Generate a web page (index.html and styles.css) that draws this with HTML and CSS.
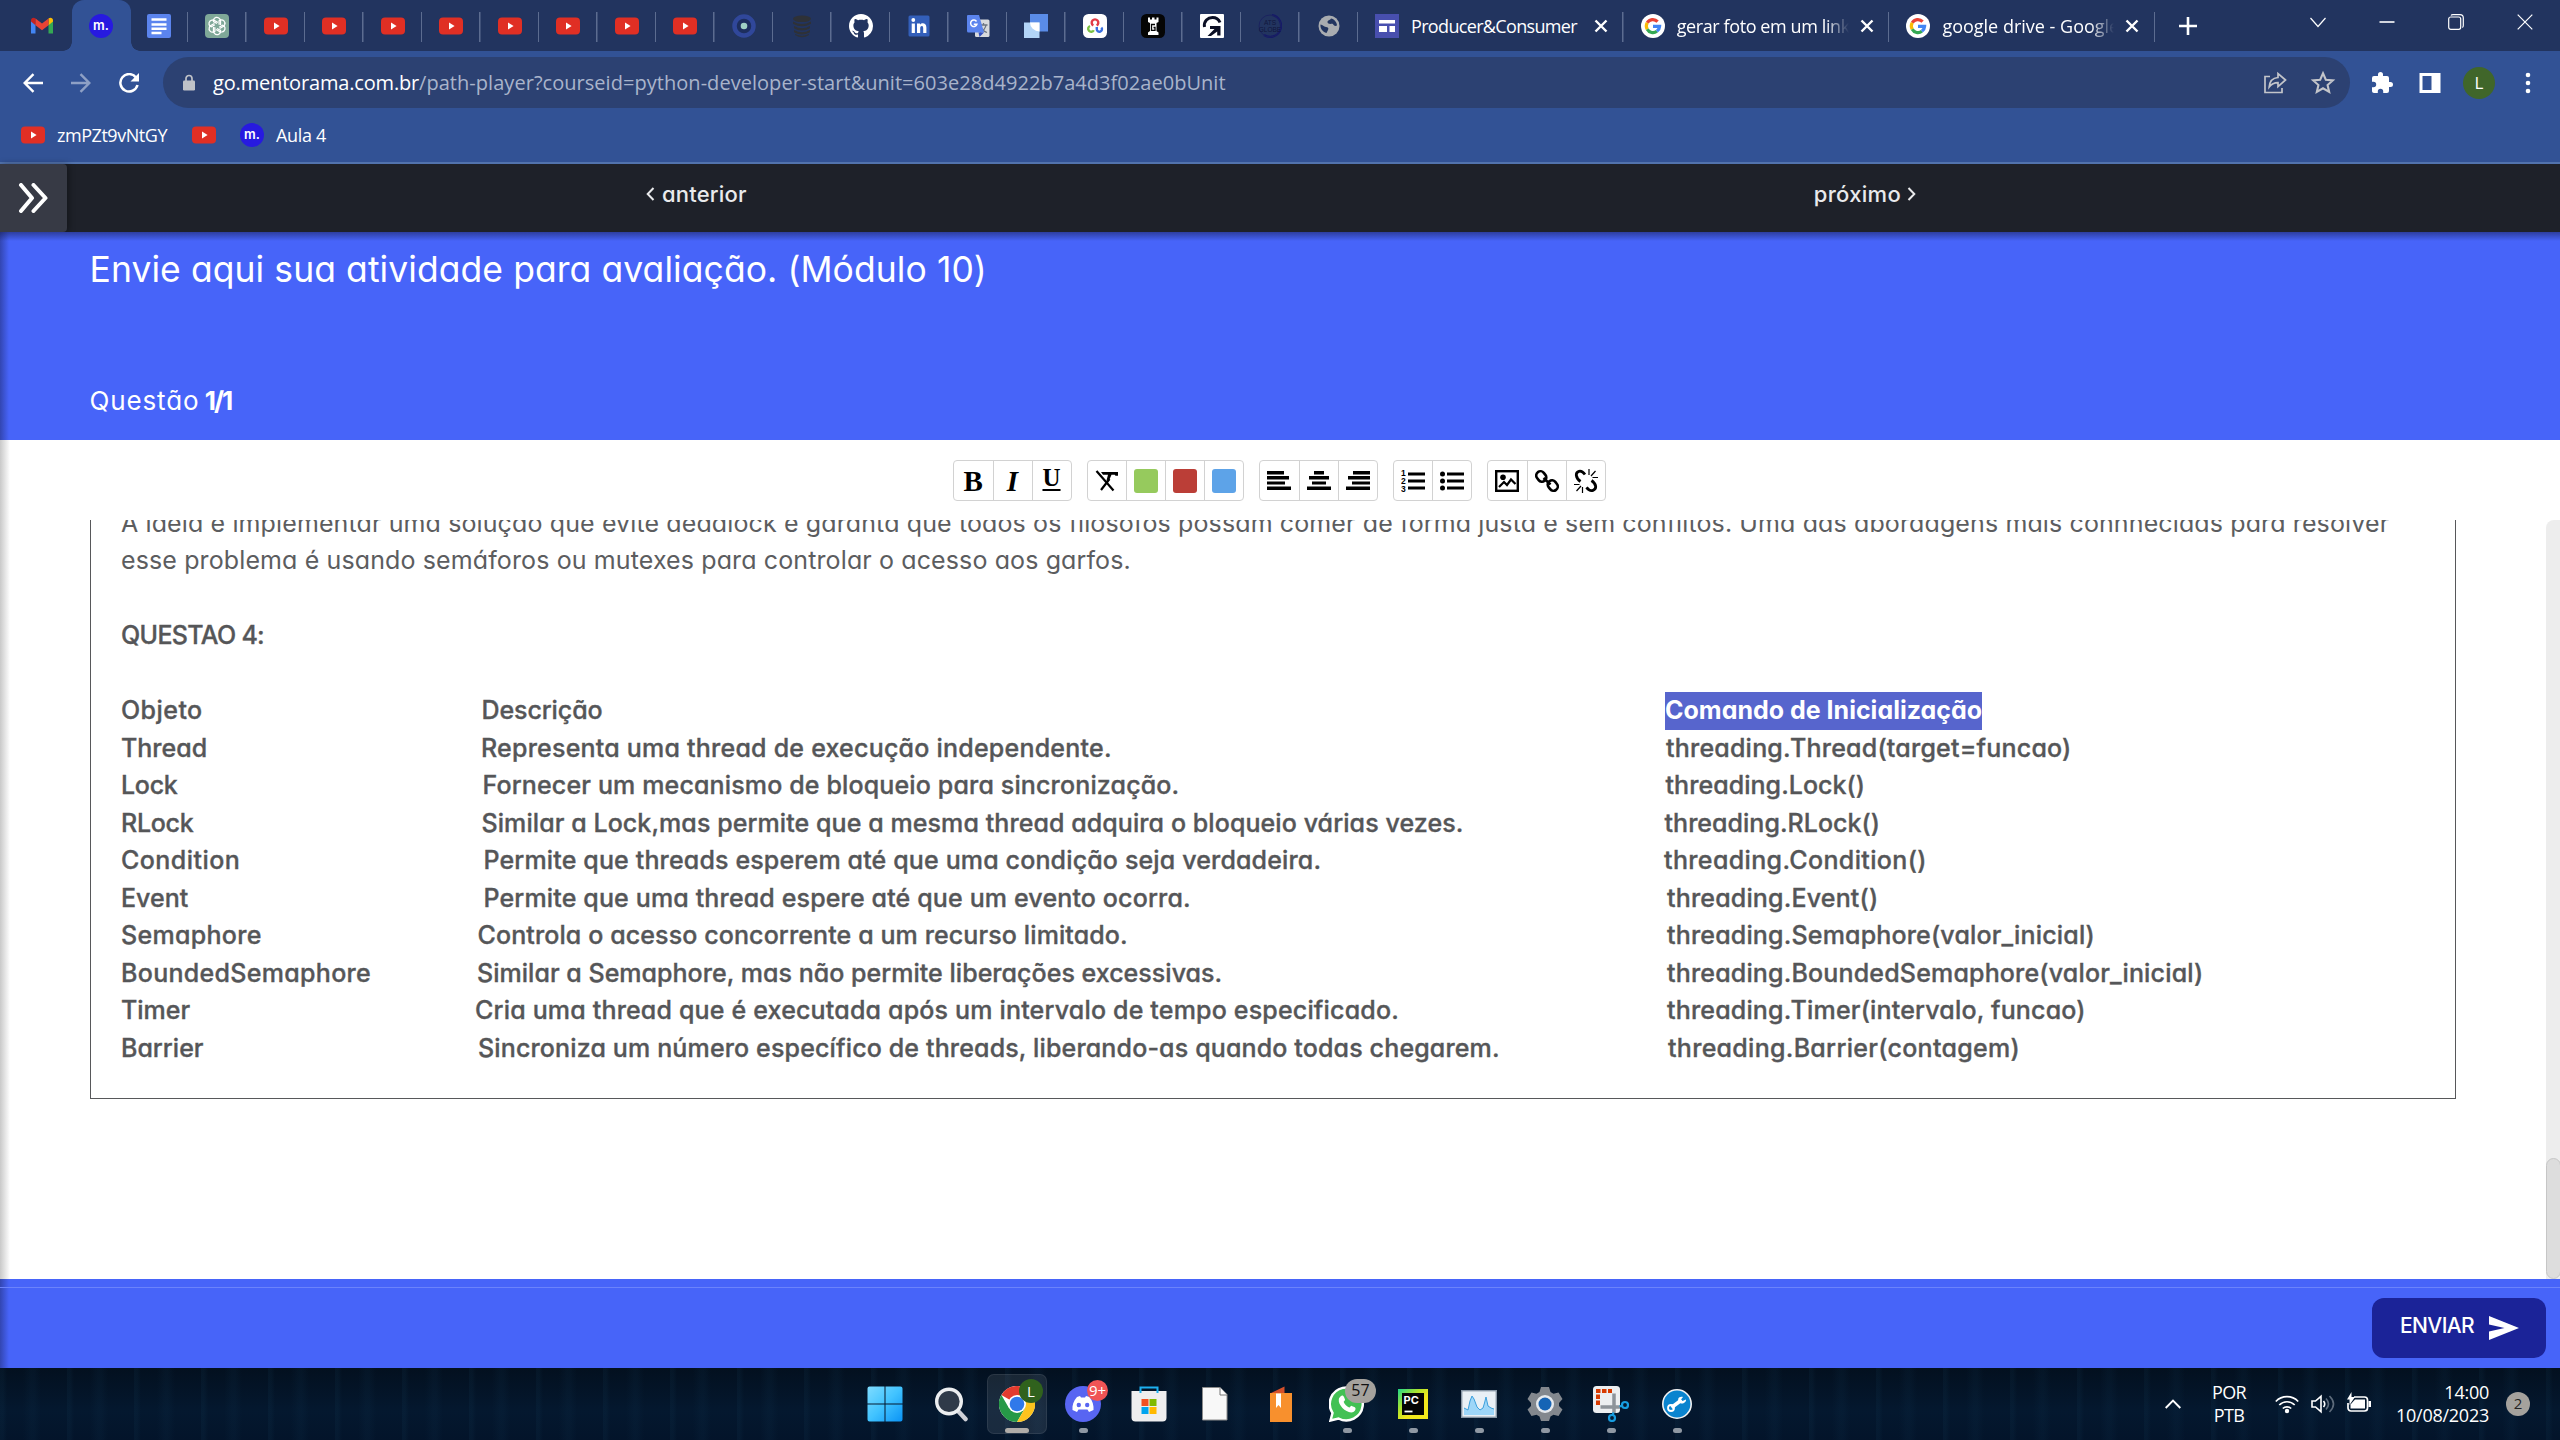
FILE: index.html
```html
<!DOCTYPE html>
<html lang="pt-BR">
<head>
<meta charset="utf-8">
<title>Aula 4</title>
<link rel="stylesheet" href="styles.css">
</head>
<body>
<svg class="defs" aria-hidden="true">
  <symbol id="yt" viewBox="0 0 24 24"><rect y="3.500" width="24" height="17" rx="4" fill="#e02f24"/><path d="M10 8.600v6.800l5.600-3.400z" fill="#fff"/></symbol>
  <symbol id="google" viewBox="0 0 24 24"><circle cx="12" cy="12" r="12" fill="#fff"/><g fill="none" stroke-width="3.200"><path d="M16.600 7.600A6.600 6.600 0 0 0 6.200 8.800" stroke="#ea4335"/><path d="M6.200 8.800a6.600 6.600 0 0 0 0 6.400" stroke="#fbbc05"/><path d="M6.200 15.200a6.600 6.600 0 0 0 9.700 2.100" stroke="#34a853"/><path d="M15.900 17.300a6.600 6.600 0 0 0 2.700-4.900H12" stroke="#4285f4"/></g></symbol>
  <symbol id="x" viewBox="0 0 14 14"><path d="M1.500 1.500l11 11M12.500 1.500l-11 11" stroke="#fff" stroke-width="2.400"/></symbol>
</svg>

<header class="browser">
  <div class="tabs">
    <div class="tab tab-first"><svg class="fav" viewBox="0 0 24 24"><path d="M1 6v13.500h4.500V10z" fill="#4285f4"/><path d="M23 6v13.500h-4.500V10z" fill="#34a853"/><path d="M1 7.500V6.300C1 4 3.500 3 5.500 4.500v6.700z" fill="#c5221f"/><path d="M23 7.500V6.300c0-2.300-2.500-3.300-4.500-1.800v6.700z" fill="#fbbc04"/><path d="M5.500 4.500L12 9.600l6.500-5.100v6.700L12 16.200l-6.500-5z" fill="#ea4335"/></svg></div>
    <div class="tab tab-active"><span class="m-icon">m.</span></div>
    <div class="tab"><svg class="fav" viewBox="0 0 24 24"><rect width="24" height="24" rx="2" fill="#5b84ee"/><path d="M4.500 5.500h15M4.500 10.500h15M4.500 14.800h15M4.500 19h10" stroke="#fff" stroke-width="2.400"/></svg></div>
    <div class="tab"><svg class="fav" viewBox="0 0 24 24"><rect width="24" height="24" rx="4" fill="#7fa898"/><g fill="none" stroke="#fff" stroke-width="1.300"><path id="petal" d="M12 9.500L8.500 7.600V6.200A3.400 3.400 0 0 1 14.500 4.600L15.500 6v5"/><use href="#petal" transform="rotate(60 12 12)"/><use href="#petal" transform="rotate(120 12 12)"/><use href="#petal" transform="rotate(180 12 12)"/><use href="#petal" transform="rotate(240 12 12)"/><use href="#petal" transform="rotate(300 12 12)"/></g></svg></div>
    <div class="tab"><svg class="fav"><use href="#yt"/></svg></div>
    <div class="tab"><svg class="fav"><use href="#yt"/></svg></div>
    <div class="tab"><svg class="fav"><use href="#yt"/></svg></div>
    <div class="tab"><svg class="fav"><use href="#yt"/></svg></div>
    <div class="tab"><svg class="fav"><use href="#yt"/></svg></div>
    <div class="tab"><svg class="fav"><use href="#yt"/></svg></div>
    <div class="tab"><svg class="fav"><use href="#yt"/></svg></div>
    <div class="tab"><svg class="fav"><use href="#yt"/></svg></div>
    <div class="tab"><svg class="fav" viewBox="0 0 24 24"><circle cx="12" cy="12" r="9.500" fill="#1d2e5e" stroke="#30479a" stroke-width="4.500"/><circle cx="12" cy="12" r="3.300" fill="#9fd0c4"/></svg></div>
    <div class="tab"><svg class="fav" viewBox="0 0 24 24"><g fill="#2e3137"><ellipse cx="12" cy="4.800" rx="9" ry="3.300"/><path d="M3 7.500q9 5 18 0v2.300q-9 5-18 0zM4 12q8 4.500 16 0v2.300q-8 4.500-16 0zM4 16q8 4.500 16 0v2.300q-8 4.500-16 0zM5 20q7 3.500 14 0v1q-7 4.500-14 0z"/></g></svg></div>
    <div class="tab"><svg class="fav" viewBox="0 0 16 16"><path fill="#fff" d="M8 0C3.580 0 0 3.580 0 8c0 3.540 2.290 6.530 5.470 7.590.4.070.55-.17.55-.38 0-.19-.01-.82-.01-1.490-2.010.37-2.530-.49-2.690-.94-.09-.23-.48-.94-.82-1.130-.28-.15-.68-.52-.01-.53.63-.01 1.080.58 1.230.82.72 1.210 1.870.87 2.330.66.070-.52.280-.87.510-1.070-1.780-.2-3.640-.89-3.640-3.950 0-.87.310-1.590.82-2.150-.08-.2-.36-1.020.08-2.120 0 0 .67-.21 2.200.82.640-.18 1.320-.27 2-.27s1.360.09 2 .27c1.530-1.040 2.200-.82 2.200-.82.440 1.100.160 1.920.080 2.120.510.560.820 1.270.820 2.150 0 3.070-1.870 3.750-3.650 3.950.290.250.540.730.540 1.480 0 1.070-.01 1.930-.01 2.200 0 .21.150.46.550.38A8 8 0 0 0 16 8c0-4.420-3.580-8-8-8z"/></svg></div>
    <div class="tab"><svg class="fav" viewBox="0 0 24 24"><rect x="1.500" y="1.500" width="21" height="21" rx="1.500" fill="#335fba"/><circle cx="6.300" cy="6" r="1.900" fill="#fff"/><path d="M4.700 9.500h3.200v9.500H4.700zM10 9.500h3v1.300c1.800-2.500 6.400-1.900 6.400 2.600V19h-3.200v-5c0-2.800-3-2.600-3 0v5H10z" fill="#fff"/></svg></div>
    <div class="tab"><svg class="fav" viewBox="0 0 24 24"><rect x="9" y="5.500" width="14.500" height="17.500" rx="1.500" fill="#d8dadd"/><path d="M13.500 11h8M17.500 9v2M20 11c-.5 3-3 6-6 7.500M15 13c1 2.500 3 4.500 6 5.500" stroke="#6b7480" stroke-width="1.300" fill="none"/><path d="M2 1h11l5 17.500H2.500A1.500 1.500 0 0 1 1 17V2a1 1 0 0 1 1-1z" fill="#5b84ee"/><path d="M12.500 18.500H18L13.500 23z" fill="#3450c0"/><path d="M10.500 7.500a3.200 3.200 0 1 0 .4 2.700H7.800" fill="none" stroke="#fff" stroke-width="1.500"/></svg></div>
    <div class="tab"><svg class="fav" viewBox="0 0 24 24"><rect x="6" width="18" height="17.500" fill="#5a8ce8"/><path d="M0 8.500h15.500V24H0z" fill="#b2d4f7"/><path d="M6 8.500h9.500v9A9.500 9 0 0 1 6 8.500z" fill="#fff"/></svg></div>
    <div class="tab"><svg class="fav" viewBox="0 0 24 24"><rect width="24" height="24" rx="5.500" fill="#fff"/><g fill="none" stroke-width="2.400"><path d="M10.300 11.500a3.300 3.300 0 1 1 3.400 0" stroke="#e23b48"/><path d="M7 12a3 3 0 1 0 3.800 4.200" stroke="#7bc143"/><path d="M13.800 13v2a2.600 2.600 0 1 0 4.600-1.500" stroke="#3a6fe0"/></g></svg></div>
    <div class="tab"><svg class="fav" viewBox="0 0 24 24"><rect width="24" height="24" rx="5.500" fill="#050505"/><path d="M7 3.500h2v2h2v-2h2.500v2h2v-2h2V8l-2 1v8l2 1.500V21H7v-2.500L9 17V9L7 8z" fill="#fff"/><path d="M14 10.500h-3.500v5.800H14v-2.800h-1.500" fill="none" stroke="#050505" stroke-width="1.300"/></svg></div>
    <div class="tab"><svg class="fav" viewBox="0 0 24 24"><rect width="24" height="24" rx="1" fill="#fff"/><path d="M4.500 13C3.500 7 8 3.500 12.500 3.500c3.500 0 6 1.500 7.500 5" fill="none" stroke="#0b0f24" stroke-width="3"/><path d="M10 12h10.500v9.500h-3.300v-4L11 22H7.500l7-7H10z" fill="#0b0f24"/></svg></div>
    <div class="tab"><svg class="fav" viewBox="0 0 24 24"><path d="M14 1a11 11 0 1 1-8 20" fill="none" stroke="#15186b" stroke-width="2.200"/><circle cx="12" cy="12" r="11" fill="none" stroke="#1b235f"/><text x="12" y="11" text-anchor="middle" class="ats">ATS</text><text x="12" y="17.500" text-anchor="middle" class="ats">GLOBE</text></svg></div>
    <div class="tab"><svg class="fav" viewBox="0 0 24 24"><circle cx="12" cy="12" r="10.500" fill="#a9acb0"/><path d="M3.500 10.500c2.500.5 3 2 5.500 2.500 2 .3 3 1.200 2 3L9.500 19c-4-1-6.500-5-6-8.500zM14 4.500c3 .5 6 3.500 6 7-2 1-3.500 0-4-1.500-1.500-.5-5.500.8-5.500-2C10.500 6 13 6.500 14 4.500z" fill="#22345f"/></svg></div>
    <div class="tab tab-wide"><svg class="fav" viewBox="0 0 24 24"><rect width="24" height="24" fill="#484fae"/><path d="M4 6h16v3.500H4zM4 12h8v6H4zM14.500 12H20v6h-5.500z" fill="#fff"/></svg><span class="tab-title t1">Producer&amp;Consumer</span><svg class="close"><use href="#x"/></svg></div>
    <div class="tab tab-wide"><svg class="fav"><use href="#google"/></svg><span class="tab-title t2 fade">gerar foto em um link</span><svg class="close"><use href="#x"/></svg></div>
    <div class="tab tab-wide"><svg class="fav"><use href="#google"/></svg><span class="tab-title fade">google drive - Google</span><svg class="close"><use href="#x"/></svg></div>
    <svg class="plus" viewBox="0 0 18 18"><path d="M9 0v18M0 9h18" stroke="#fff" stroke-width="2.600"/></svg>
    <div class="window-buttons">
      <svg viewBox="0 0 16 16"><path d="M.5 4l7.500 8.500L15.500 4"/></svg>
      <svg viewBox="0 0 16 16"><path d="M.5 8h15" stroke-width="1.600"/></svg>
      <svg viewBox="0 0 16 16"><rect x=".7" y="3" width="12" height="12.300" rx="2"/><path d="M3 1.500Q3.500.7 5 .7h7q3.300 0 3.300 3.300v7.500q0 1.500-1 2"/></svg>
      <svg viewBox="0 0 16 16"><path d="M.7.700l14.600 14.600M15.300.7L.7 15.300"/></svg>
    </div>
  </div>
  <div class="address-row">
    <svg class="nav-icon" viewBox="0 0 20 20"><path d="M20 10H2M10.500 1.200L1.700 10l8.800 8.800" fill="none" stroke="#fff" stroke-width="2.400"/></svg>
    <svg class="nav-icon dim" viewBox="0 0 20 20"><path d="M0 10h18M9.500 1.200l8.800 8.800-8.800 8.800" fill="none" stroke="#fff" stroke-width="2.400"/></svg>
    <svg class="nav-icon" viewBox="0 0 20 20"><path d="M17 4.500A8.700 8.700 0 1 0 18.500 12" fill="none" stroke="#fff" stroke-width="2.500"/><path d="M20 0v8.500h-8.500z" fill="#fff"/></svg>
    <div class="url">
      <svg class="lock" viewBox="0 0 12 16"><path d="M3 7V4a3 3 0 0 1 6 0v3" fill="none" stroke="#bfc2c8" stroke-width="1.700"/><rect y="6" width="12" height="10" rx="1.200" fill="#bfc2c8"/></svg>
      <span class="host">go.mentorama.com.br</span><span class="path">/path-player?courseid=python-developer-start&amp;unit=603e28d4922b7a4d3f02ae0bUnit</span>
      <svg class="share" viewBox="0 0 24 24"><path d="M7 5.500H2v16h17V17M22.500 9L15 2.500v4C9 7 6.500 11 6.200 16c2.300-3 5-4.300 8.800-4.300v4z" fill="none" stroke="#c3c5ca" stroke-width="1.700"/></svg>
      <svg class="star" viewBox="0 0 24 24"><path d="M12 3l2.600 6 6.500.6-4.900 4.300 1.500 6.400-5.700-3.400-5.700 3.400 1.500-6.400-4.900-4.300 6.500-.6z" fill="none" stroke="#c3c5ca" stroke-width="1.900"/></svg>
    </div>
    <div class="actions">
      <svg viewBox="0 0 24 24"><path fill="#fff" d="M20.500 11H19V7a2 2 0 0 0-2-2h-4V3.500a2.500 2.500 0 0 0-5 0V5H4a2 2 0 0 0-2 2v3.800h1.500a2.700 2.700 0 0 1 0 5.400H2V20c0 1.100.9 2 2 2h3.800v-1.500a2.700 2.700 0 0 1 5.400 0V22H17a2 2 0 0 0 2-2v-4h1.500a2.500 2.500 0 0 0 0-5z"/></svg>
      <svg viewBox="0 0 24 24"><path fill="#fff" fill-rule="evenodd" d="M1.500 2h21v20h-21zM4.500 5v14h9V5z"/></svg>
      <span class="avatar">L</span>
      <svg viewBox="0 0 24 24"><g fill="#fff"><circle cx="12" cy="4" r="2.300"/><circle cx="12" cy="12" r="2.300"/><circle cx="12" cy="20" r="2.300"/></g></svg>
    </div>
  </div>
  <div class="bookmarks">
    <svg class="fav"><use href="#yt"/></svg><span class="bm1">zmPZt9vNtGY</span>
    <svg class="fav"><use href="#yt"/></svg><span class="m-icon">m.</span><span class="bm2">Aula 4</span>
  </div>
</header>

<main class="page">
  <nav class="lesson-nav">
    <div class="expand"><svg viewBox="0 0 30 30"><path d="M2.500 2L13.500 15 2.500 28M15 2l12 13-12 13" fill="none" stroke="#fff" stroke-width="4" stroke-linecap="round" stroke-linejoin="round"/></svg></div>
    <a class="prev"><svg viewBox="0 0 9 14"><path d="M7.500 1L1.700 7l5.800 6"/></svg>anterior</a>
    <a class="next">próximo<svg viewBox="0 0 9 14"><path d="M1.500 1l5.800 6-5.800 6"/></svg></a>
  </nav>
  <section class="banner">
    <h1>Envie aqui sua atividade para avaliação. (Módulo 10)</h1>
    <p><span class="q">Questão</span> <b>1/1</b></p>
  </section>
  <section class="work">
    <div class="toolbar">
      <div class="group">
        <span class="fmt b">B</span><span class="fmt i">I</span><span class="fmt u">U</span>
      </div>
      <div class="group">
        <span><svg viewBox="0 0 24 24"><path d="M6 3h17v3.800h-2.500l-.8-1H16.500L14 11.500h-2.500L13 5.800H8z"/><path d="M1.500 2l17 19.500M14.500 10L6 21" stroke="#000" stroke-width="2.200" fill="none"/></svg></span>
        <span><i class="swatch green"></i></span><span><i class="swatch red"></i></span><span><i class="swatch blue"></i></span>
      </div>
      <div class="group">
        <span><svg viewBox="0 0 24 24"><path d="M0 2h17v3.500H0zM0 7h22v3.500H0zM0 12.500h18v3H0zM0 17.500h24V21H0z"/></svg></span>
        <span><svg viewBox="0 0 24 24"><path d="M7 2h10v3.500H7zM2 7h20v3.500H2zM5 12.500h14v3H5zM0 17.500h24V21H0z"/></svg></span>
        <span><svg viewBox="0 0 24 24"><path d="M7 2h17v3.500H7zM2 7h22v3.500H2zM6 12.500h18v3H6zM0 17.500h24V21H0z"/></svg></span>
      </div>
      <div class="group">
        <span><svg viewBox="0 0 24 24"><path d="M7 3.500h17v3H7zM7 10.500h17v3H7zM7 17.500h17v3H7z"/><text x="0" y="7" class="num">1</text><text x="0" y="15" class="num">2</text><text x="0" y="23" class="num">3</text></svg></span>
        <span><svg viewBox="0 0 24 24"><path d="M7 3.500h17v3H7zM7 10.500h17v3H7zM7 17.500h17v3H7z"/><circle cx="2.500" cy="5" r="2.500"/><circle cx="2.500" cy="12" r="2.500"/><circle cx="2.500" cy="19" r="2.500"/></svg></span>
      </div>
      <div class="group">
        <span><svg viewBox="0 0 24 24"><rect x="1.200" y="2.200" width="21.600" height="19.600" fill="none" stroke="#000" stroke-width="2.400"/><circle cx="8" cy="8.300" r="2.800"/><path d="M4 18l5-5 3 3 4-5.500 4.500 4.500" fill="none" stroke="#000" stroke-width="2.200"/></svg></span>
        <span><svg viewBox="0 0 24 24"><g fill="none" stroke="#000" stroke-width="2.600"><rect x="2" y="2" width="8.500" height="11" rx="4.200" transform="rotate(-38 6.200 7.500)"/><rect x="13.500" y="11" width="8.500" height="11" rx="4.200" transform="rotate(-38 17.800 16.500)"/><path d="M8.500 9l7 6.500"/></g></svg></span>
        <span><svg viewBox="0 0 24 24"><g fill="none" stroke="#000" stroke-width="2.800"><path d="M6.500 12.500C1.500 9 1 3.500 5 2.300 8 1.500 9.500 3.500 11 5.500"/><path d="M17.500 11.500c5 3.500 5.500 8.500 1.500 9.800-3 1-5-1-6.500-3"/></g><path d="M15 0v6M21.500 2l-4.500 5M24 8.500h-5.500M8.500 24v-6M2.500 22l4.500-5M0 15.500h5.500" stroke="#000" stroke-width="1.200"/></svg></span>
      </div>
    </div>
    <div class="editor-scroll">
      <div class="editor">
        <p class="para">A ideia é implementar uma solução que evite deadlock e garanta que todos os filósofos possam comer de forma justa e sem conflitos. Uma das abordagens mais connhecidas para resolver<br>esse problema é usando semáforos ou mutexes para controlar o acesso aos garfos.</p>
        <p class="heading">QUESTAO 4:</p>
        <div class="rows">
          <div class="row"><span>Objeto</span><span>Descrição</span><span><mark>Comando de Inicialização</mark></span></div>
          <div class="row"><span>Thread</span><span>Representa uma thread de execução independente.</span><span>threading.Thread(target=funcao)</span></div>
          <div class="row"><span>Lock</span><span>Fornecer um mecanismo de bloqueio para sincronização.</span><span>threading.Lock()</span></div>
          <div class="row"><span>RLock</span><span>Similar a Lock,mas permite que a mesma thread adquira o bloqueio várias vezes.</span><span>threading.RLock()</span></div>
          <div class="row"><span>Condition</span><span>Permite que threads esperem até que uma condição seja verdadeira.</span><span>threading.Condition()</span></div>
          <div class="row"><span>Event</span><span>Permite que uma thread espere até que um evento ocorra.</span><span>threading.Event()</span></div>
          <div class="row"><span>Semaphore</span><span>Controla o acesso concorrente a um recurso limitado.</span><span>threading.Semaphore(valor_inicial)</span></div>
          <div class="row"><span>BoundedSemaphore</span><span>Similar a Semaphore, mas não permite liberações excessivas.</span><span>threading.BoundedSemaphore(valor_inicial)</span></div>
          <div class="row"><span>Timer</span><span>Cria uma thread que é executada após um intervalo de tempo especificado.</span><span>threading.Timer(intervalo, funcao)</span></div>
          <div class="row"><span>Barrier</span><span>Sincroniza um número específico de threads, liberando-as quando todas chegarem.</span><span>threading.Barrier(contagem)</span></div>
        </div>
      </div>
      <div class="track"><div class="thumb"></div></div>
    </div>
  </section>
  <footer class="send-bar">
    <button class="send"><span>ENVIAR</span><svg viewBox="0 0 30 24"><path d="M0 0l30 12L0 24v-8.500L15.500 12 0 8.500z" fill="#fff"/></svg></button>
  </footer>
</main>

<div class="taskbar">
  <div class="apps">
    <div class="app"><svg viewBox="0 0 36 36"><defs><linearGradient id="win" x1="0" y1="0" x2="1" y2="1"><stop offset="0" stop-color="#7fdcff"/><stop offset=".5" stop-color="#41c3ff"/><stop offset="1" stop-color="#0a93f5"/></linearGradient></defs><path d="M.5 2.500a2 2 0 0 1 2-2H17.500v17H.5zM18.500.5h15a2 2 0 0 1 2 2v15h-17zM.5 18.500h17v17h-15a2 2 0 0 1-2-2zM18.500 18.500h17v15a2 2 0 0 1-2 2h-15z" fill="url(#win)"/></svg></div>
    <div class="app"><svg viewBox="0 0 36 36"><path d="M26 26l6.500 7" stroke="#cfd1d8" stroke-width="4.500" stroke-linecap="round"/><circle cx="16" cy="15.500" r="12.300" fill="#2f3a49" stroke="#eceef0" stroke-width="3.400"/></svg></div>
    <div class="app current"><svg viewBox="0 0 36 36"><circle cx="18" cy="18" r="18" fill="#fff"/><path d="M18 18L2.400 9A18 18 0 0 1 33.600 9H18z" fill="#e33b2e"/><path d="M2.400 9A18 18 0 0 0 18 36l7.800-13.500L18 18l-7.800 4.500z" fill="#269947"/><path d="M33.600 9A18 18 0 0 1 18 36l7.800-13.500L18 9z" fill="#fcc31e"/><circle cx="18" cy="18" r="9" fill="#fff"/><circle cx="18" cy="18" r="7.300" fill="#3079ea"/></svg><span class="badge badge-l">L</span></div>
    <div class="app run"><svg viewBox="0 0 36 36"><circle cx="18" cy="18" r="18" fill="#5865f2"/><path d="M12 11l3-1 1 1.500h4l1-1.500 3.500 1c3 4 4.500 8.500 4 13l-4.500 2-1.500-2.500h-9L12 26l-4.500-2c-.5-4.500 1-9.500 4.500-13z" fill="#fff"/><circle cx="13.800" cy="19" r="2.200" fill="#5865f2"/><circle cx="22.200" cy="19" r="2.200" fill="#5865f2"/></svg><span class="badge badge-9">9+</span></div>
    <div class="app"><svg viewBox="0 0 36 36"><path d="M.5 5h35v26.500a4 4 0 0 1-4 4h-27a4 4 0 0 1-4-4z" fill="#eeeeef"/><path d="M9.500 7V1.500h17V7" fill="none" stroke="#1cb0f0" stroke-width="2"/><path d="M10.500 13h7v7h-7z" fill="#f25022"/><path d="M18.500 13h7v7h-7z" fill="#7fba00"/><path d="M10.500 21h7v7h-7z" fill="#00a4ef"/><path d="M18.500 21h7v7h-7z" fill="#ffb900"/></svg></div>
    <div class="app"><svg viewBox="0 0 36 36"><path d="M5.500 1.500h17.500l7 7V34h-24.500z" fill="#f8f8f8" stroke="#8b8b8b"/><path d="M23 1.500V9h7" fill="#fff" stroke="#777"/></svg></div>
    <div class="app"><svg viewBox="0 0 36 36"><path d="M7 7.500L21.500.5v8z" fill="#d4502a"/><path d="M7 7h22v29H7z" fill="#f8902d"/><path d="M13 7.500h5V22l-2.500-3-2.500 3z" fill="#fff"/></svg></div>
    <div class="app run"><svg viewBox="0 0 36 36"><path d="M1.500 34.500L3.500 27A16.500 16.500 0 1 1 9.500 32.500z" fill="#42c154" stroke="#fff" stroke-width="2.500"/><path d="M12 10c1-1 2.500-.5 3 1l1 2.500c.3 1-1.500 2-1.300 2.600 1 2.400 3 4.400 5.500 5.400.8.200 1.700-2 2.600-1.600l3 1.400c1.500 1 .5 3.500-1 4.500-6 3-16-6-15-12.500.2-1.500 1.200-2.500 2.200-3.300z" fill="#fff"/></svg><span class="badge badge-57">57</span></div>
    <div class="app run"><svg viewBox="0 0 36 36"><defs><linearGradient id="pc" x1="0" y1="0" x2="1" y2="1"><stop offset="0" stop-color="#21d789"/><stop offset=".35" stop-color="#a8e32f"/><stop offset=".6" stop-color="#f3e81c"/></linearGradient></defs><path d="M3 3h30v30H3z" fill="url(#pc)"/><path d="M7 7h22v22H7z" fill="#050505"/><path d="M9.500 25.500h8" stroke="#fff" stroke-width="1.800"/><text x="8.500" y="18" class="pc">PC</text></svg></div>
    <div class="app run"><svg viewBox="0 0 36 36"><rect x=".7" y="4.700" width="34.600" height="26.600" fill="#e9f0f6" stroke="#8796a5" stroke-width="1.400"/><path d="M3 22l4 2 2-9 2-5 2 3 3 8 3 3 3-2 1.500-5 1.500-6 2 9 3 2 3 1v6H3z" fill="#9ed6f8"/><path d="M3 22l4 2 2-9 2-5 2 3 3 8 3 3 3-2 1.500-5 1.500-6 2 9 3 2 3 1" fill="none" stroke="#3a9fdc"/></svg></div>
    <div class="app run"><svg viewBox="0 0 36 36"><path d="M14 1h8l1.500 5 3 1.800L31.500 6.500 35.500 13 32 17v3l3.500 3.500-4 6.500-5-1.200-3 1.700L22 35h-8l-1.500-4.500-3-1.700-5 1.200-4-6.500L4 20v-3L.5 13l4-6.500 5 1.300 3-1.800z" fill="#83888e"/><circle cx="18" cy="18" r="9" fill="#e6eaee"/><circle cx="18" cy="18" r="6.500" fill="#1664b5"/></svg></div>
    <div class="app run"><svg viewBox="0 0 36 36"><rect width="27" height="27" rx="3.500" fill="#eceff1"/><path d="M5 19V5h14" fill="none" stroke="#d83b01" stroke-width="4" stroke-dasharray="4.500 1.500"/><path d="M7.500 21H27M21 7.500V27" stroke="#8d949a" stroke-width="3.500"/><path d="M20.500 26.500l-1 3M26.500 20.500l3-1" stroke="#169de0" stroke-width="2.200"/><circle cx="19" cy="32" r="3" fill="none" stroke="#169de0" stroke-width="2.200"/><circle cx="32" cy="19" r="3" fill="none" stroke="#169de0" stroke-width="2.200"/></svg></div>
    <div class="app run"><svg viewBox="0 0 36 36"><circle cx="18" cy="18" r="14.200" fill="#0a84cf" stroke="#f2f2f2" stroke-width="1.600"/><path d="M12.500 21.500l10-7.500" stroke="#fff" stroke-width="3.600"/><circle cx="12" cy="22" r="3" fill="none" stroke="#fff" stroke-width="1.800"/><path d="M20 11.500c1.500-1 3-1 4-.5l-2 2.500 1.500 1.500 3.500-1.500c.5 3-3.500 5-6 3.500-2-1-2.500-4-1-5.500z" fill="#fff"/></svg></div>
  </div>
  <div class="tray">
    <svg class="up" viewBox="0 0 16 16"><path d="M.7 12L8 4.700l7.300 7.300" fill="none" stroke="#fff" stroke-width="1.900"/></svg>
    <div class="lang">POR<br>PTB</div>
    <svg class="ico" viewBox="0 0 24 24"><g fill="none" stroke="#fff" stroke-width="1.700"><path d="M.8 9.500a15.500 15.500 0 0 1 22.400 0M4.300 13a10.700 10.700 0 0 1 15.400 0M7.800 16.500a6 6 0 0 1 8.400 0"/></g><circle cx="12" cy="19" r="2.200" fill="#fff"/></svg>
    <svg class="ico" viewBox="0 0 24 24"><path d="M1 9h3.500L10 4.300v15.400L4.500 15H1z" fill="none" stroke="#fff" stroke-width="1.600"/><path d="M12.500 9q2.500 3 0 6" fill="none" stroke="#fff" stroke-width="1.600"/><path d="M15 6.500q5 5.500 0 11M18.500 4q8 8 0 16" fill="none" stroke="#5d6b7b" stroke-width="1.600"/></svg>
    <svg class="ico" viewBox="0 0 24 24"><path d="M7 5h10.500a3 3 0 0 1 3 3v8a3 3 0 0 1-3 3H4a3 3 0 0 1-3-3v-5" fill="none" stroke="#fff" stroke-width="1.700"/><path d="M8 7.500h10V16.500H3.500V12.500z" fill="#fff"/><path d="M21.500 9H24v6h-2.500zM4.500 0v5H8L2.500 13V7.500H0z" fill="#fff"/></svg>
    <div class="clock">14:00<br>10/08/2023</div>
    <span class="count">2</span>
  </div>
</div>
</body>
</html>
```
FILE: styles.css
```css
* { box-sizing: border-box; }
body {
  margin: 0;
  width: 2560px;
  height: 1440px;
  overflow: hidden;
  display: flex;
  flex-direction: column;
  font-family: Inter, "Noto Sans", sans-serif;
  font-feature-settings: "cv11";
}
.defs { position: absolute; width: 0; height: 0; }
svg { display: block; flex: none; }
h1, p { margin: 0; font-weight: 400; }

/* Browser chrome */
.browser {
  height: 164px;
  flex: none;
  background: #325295;
  border-bottom: 2px solid #5273ad;
  color: #fff;
  font-family: "Open Sans", "Noto Sans", sans-serif;
  font-size: 18px;
}
.tabs { height: 51px; background: #22345f; display: flex; padding-left: 13px; }
.tab {
  width: 58.500px;
  height: 51px;
  flex: none;
  display: flex;
  align-items: center;
  justify-content: center;
  padding-top: 1px;
  background: linear-gradient(#5c6c90, #5c6c90) right 12px / 1.500px 30px no-repeat;
}
.tab-first { background: none; }
.tab-active {
  width: 59px;
  position: relative;
  background: #325295;
  border-radius: 12px 12px 0 0;
}
.tab-active::before, .tab-active::after {
  content: "";
  position: absolute;
  bottom: 0;
  width: 9px;
  height: 9px;
}
.tab-active::before { left: -9px; background: radial-gradient(circle at 0 0, transparent 8.500px, #325295 9px); }
.tab-active::after { right: -9px; background: radial-gradient(circle at 100% 0, transparent 8.500px, #325295 9px); }
.tab-active + .tab { margin-left: -1px; }
.fav { width: 24px; height: 24px; }
.m-icon {
  width: 24px;
  height: 24px;
  border-radius: 50%;
  background: #271ae0;
  color: #fff;
  font: 600 13px/22px Inter, sans-serif;
  text-align: center;
}
.ats { font: 6.500px "Liberation Sans", sans-serif; fill: #11163d; }
.tab-wide { width: 265.700px; justify-content: flex-start; padding-left: 17px; }
.tab-title { width: 172px; margin-left: 12px; overflow: hidden; white-space: nowrap; line-height: 26px; }
.t1 { letter-spacing: -.66px; }
.t2 { letter-spacing: -.4px; }
.fade { -webkit-mask-image: linear-gradient(90deg, #000 148px, transparent 172px); mask-image: linear-gradient(90deg, #000 148px, transparent 172px); }
.close { width: 14px; height: 14px; margin-left: 11px; }
.plus { width: 18px; height: 18px; margin: 17px 0 0 24px; }
.window-buttons { margin-left: 113px; display: flex; gap: 53px; padding-top: 14px; }
.window-buttons svg { width: 16px; height: 16px; fill: none; stroke: #fff; stroke-width: 1.200; }
.address-row { height: 63px; display: flex; align-items: center; padding: 0 20px 0 23px; }
.nav-icon { width: 20px; height: 20px; margin-right: 28px; }
.dim { opacity: .45; }
.url {
  width: 2188px;
  height: 51px;
  margin: 0 20px 0 -4px;
  border-radius: 26px;
  background: #2c4172;
  display: flex;
  align-items: center;
  padding: 0 14px 0 20px;
  font-size: 20px;
}
.lock { width: 12px; height: 17px; margin-right: 11px; }
.host { letter-spacing: -.17px; margin-left: 7px; }
.path { color: #a9b4cb; letter-spacing: .04px; }
.share { width: 24px; height: 24px; margin-left: auto; }
.star { width: 26px; height: 26px; margin-left: 23px; }
.actions { display: flex; align-items: center; gap: 24px; }
.actions svg { width: 24px; height: 24px; }
.avatar { width: 32px; height: 32px; margin: 0 -3px; border-radius: 50%; background: #40662a; text-align: center; font-size: 17px; line-height: 32px; }
.bookmarks { height: 42px; display: flex; align-items: center; padding: 0 0 1px 21px; }
.bm1 { width: 147px; padding-left: 12px; letter-spacing: -.46px; }
.bookmarks .m-icon { margin-left: 24px; }
.bm2 { margin-left: 12px; letter-spacing: -.32px; }

/* Lesson page */
.page { flex: none; height: 1204px; display: flex; flex-direction: column; background: #fff; }
.lesson-nav { height: 68px; flex: none; background: #1e2129; display: flex; color: #e9eaec; font-size: 22px; font-weight: 500; }
.expand { width: 67px; height: 68px; background: #373a45; border-radius: 0 4px 4px 0; display: flex; align-items: center; padding-left: 18px; box-shadow: 2px 0 6px rgba(0, 0, 0, .35); }
.expand svg { width: 31px; height: 30px; }
.prev, .next { display: flex; align-items: center; height: 60px; }
.prev { margin-left: 579px; gap: 7px; letter-spacing: .2px; }
.next { margin-left: 1067px; gap: 6px; letter-spacing: .3px; }
.prev svg, .next svg { width: 9px; height: 14px; fill: none; stroke: #e9eaec; stroke-width: 2; }
.banner {
  height: 208px;
  flex: none;
  color: #fff;
  padding: 13px 0 0 89.500px;
  background:
    linear-gradient(rgba(20, 25, 70, .5), rgba(20, 25, 70, 0)) top / 100% 9px no-repeat,
    linear-gradient(90deg, rgba(20, 25, 70, .4), rgba(20, 25, 70, 0)) left / 9px 100% no-repeat,
    #4764f9;
}
.banner h1 { font-size: 35.500px; line-height: 50px; letter-spacing: .07px; }
.banner p { font-size: 26px; line-height: 36px; margin-top: 88px; }
.q { letter-spacing: .85px; margin-right: -2px; }
.banner b { font-weight: 700; letter-spacing: -2px; }
.work {
  flex: 1;
  min-height: 0;
  display: flex;
  flex-direction: column;
  padding-top: 20px;
  background: linear-gradient(90deg, #c9c9c9, #fff) left / 10px 100% no-repeat;
}
.toolbar { height: 60px; flex: none; display: flex; gap: 15px; padding-left: 953px; }
.group { display: flex; height: 41px; border: 1px solid #d2d2d2; border-radius: 4px; }
.group > span { width: 39px; display: flex; align-items: center; justify-content: center; }
.group > span:first-child { width: 38.500px; }
.group > span + span { border-left: 1px solid #d2d2d2; }
.group svg { width: 24px; height: 24px; }
.group .fmt { font: 700 29px "Liberation Serif", serif; line-height: 38px; }
.group .i { font-style: italic; }
.group .u { font-size: 25px; line-height: 34px; align-items: flex-start; text-decoration: underline; text-decoration-thickness: 2px; text-underline-offset: 3px; }
.num { font: 700 8.500px "Liberation Sans", sans-serif; }
.swatch { width: 24px; height: 24px; border-radius: 3px; }
.green { background: #96ca5d; }
.red { background: #bb3e37; }
.blue { background: #5da3e8; }
.editor-scroll { flex: 1; min-height: 0; overflow: hidden; display: flex; align-items: flex-start; padding-left: 90px; }
.editor {
  width: 2366px;
  height: 619px;
  margin-top: -40px;
  border: 1.500px solid #57585a;
  padding: 23.500px 0 0 30px;
  font-size: 25px;
  line-height: 37.500px;
  color: #555658;
  white-space: nowrap;
}
.para { letter-spacing: .118px; color: #5c5d5f; }
.heading, .rows { font-weight: 500; margin-top: 37.500px; -webkit-text-stroke: .35px currentColor; }
.heading { letter-spacing: -.67px; }
.row { display: grid; grid-template-columns: 353px 1190px auto; height: 37.500px; }
.row > :nth-child(1) { letter-spacing: 0; }
.row > :nth-child(2) { letter-spacing: .145px; }
.row > :nth-child(3) { letter-spacing: .17px; }
.row:nth-child(1) > :nth-child(1), .row:nth-child(5) > :nth-child(1) { letter-spacing: .45px; }
.row:nth-child(3) > :nth-child(1), .row:nth-child(4) > :nth-child(1) { letter-spacing: -.3px; }
.row:nth-child(7) > :nth-child(1), .row:nth-child(8) > :nth-child(1) { letter-spacing: .31px; }
.row:nth-child(1) > :nth-child(2) { padding-left: 7.500px; letter-spacing: -.1px; }
.row:nth-child(2) > :nth-child(2) { padding-left: 7px; letter-spacing: .22px; }
.row:nth-child(3) > :nth-child(2) { padding-left: 8.500px; }
.row:nth-child(4) > :nth-child(2) { padding-left: 7.500px; letter-spacing: .08px; }
.row:nth-child(5) > :nth-child(2), .row:nth-child(6) > :nth-child(2) { padding-left: 9.500px; }
.row:nth-child(7) > :nth-child(2) { padding-left: 3.500px; letter-spacing: .11px; }
.row:nth-child(8) > :nth-child(2) { padding-left: 3px; letter-spacing: .03px; }
.row:nth-child(9) > :nth-child(2) { padding-left: 1px; letter-spacing: .178px; }
.row:nth-child(10) > :nth-child(2) { padding-left: 4px; }
.row:nth-child(1) > :nth-child(3) { padding-left: 1px; }
.row:nth-child(2) > :nth-child(3) { padding-left: 2px; letter-spacing: .21px; }
.row:nth-child(3) > :nth-child(3) { padding-left: 1.500px; letter-spacing: .05px; }
.row:nth-child(4) > :nth-child(3) { padding-left: .5px; letter-spacing: .03px; }
.row:nth-child(5) > :nth-child(3) { letter-spacing: .36px; }
.row:nth-child(n+6) > :nth-child(3) { padding-left: 3px; }
.row:nth-child(10) > :nth-child(3) { padding-left: 4px; letter-spacing: .29px; }
.row mark { background: #5765cd; color: #fff; font-weight: 700; letter-spacing: 0; padding: 3px 0 5px; -webkit-text-stroke: 0; }
.track { width: 14px; height: 759px; margin-left: 90px; background: #ededed; border-radius: 8px 0 0 0; display: flex; align-items: flex-end; }
.thumb { width: 15px; height: 121px; flex: none; background: #ddd; border: 1px solid #c6c6c6; border-radius: 8px; }
.send-bar {
  height: 89px;
  flex: none;
  display: flex;
  justify-content: flex-end;
  padding: 19px 14px 0 0;
  background:
    linear-gradient(#6b83fb, #6b83fb) 0 8px / 100% 1px no-repeat,
    linear-gradient(90deg, rgba(20, 25, 70, .4), rgba(20, 25, 70, 0)) left / 9px 100% no-repeat,
    #4764f9;
}
.send {
  width: 174px;
  height: 60px;
  border: 0;
  border-radius: 12px;
  background: #1b2398;
  color: #fff;
  display: flex;
  align-items: center;
  gap: 15px;
  padding: 0 0 0 28px;
  font: 500 21px Inter, sans-serif;
  letter-spacing: -.6px;
}
.send span { padding-bottom: 5px; }
.send svg { width: 30px; height: 24px; }

/* Windows taskbar */
.taskbar {
  height: 72px;
  flex: none;
  display: flex;
  padding-left: 852px;
  color: #fff;
  background:
    repeating-linear-gradient(90deg, rgba(30, 80, 110, .1) 0 3px, transparent 7px 23px, rgba(20, 60, 90, .12) 31px 34px, transparent 41px 67px),
    linear-gradient(#03101f, #04182f 60%, #03142a);
  font-family: "Open Sans", "Noto Sans", sans-serif;
}
.apps { display: flex; }
.app { width: 66px; height: 72px; position: relative; display: flex; align-items: center; justify-content: center; }
.app svg { width: 36px; height: 36px; position: relative; }
.current::before { content: ""; position: absolute; inset: 6px 3px; border-radius: 7px; background: rgba(255, 255, 255, .09); border: 1px solid rgba(255, 255, 255, .08); }
.current::after, .run::after { content: ""; position: absolute; bottom: 7px; left: 29px; width: 9px; height: 5px; border-radius: 3px; background: #8f98a3; }
.current::after { left: 21px; width: 24px; background: #b0aca8; }
.badge { position: absolute; border-radius: 12px; text-align: center; }
.badge-l { left: 35px; top: 11px; width: 24px; height: 24px; background: #30621d; font-size: 15px; line-height: 24px; }
.badge-9 { left: 37px; top: 12px; width: 21px; height: 21px; background: #f05455; font-size: 15px; line-height: 20px; }
.badge-57 { left: 31px; top: 11px; width: 31px; height: 24px; background: #a5a29d; color: #111; font-size: 16px; line-height: 23px; }
.pc { font: 700 11px Inter, sans-serif; fill: #fff; }
.tray { margin-left: auto; display: flex; align-items: center; padding-right: 30px; font-size: 18px; line-height: 23.500px; }
.up { width: 16px; height: 16px; margin-right: 27px; }
.lang { width: 42px; margin-right: 25px; text-align: center; letter-spacing: -.6px; }
.ico { width: 24px; height: 24px; margin-right: 12px; }
.clock { width: 106px; text-align: right; letter-spacing: -.25px; }
.count { width: 24px; height: 24px; margin-left: 17px; border-radius: 50%; background: #a5a29d; color: #222; text-align: center; font-size: 15px; line-height: 23px; }
```
